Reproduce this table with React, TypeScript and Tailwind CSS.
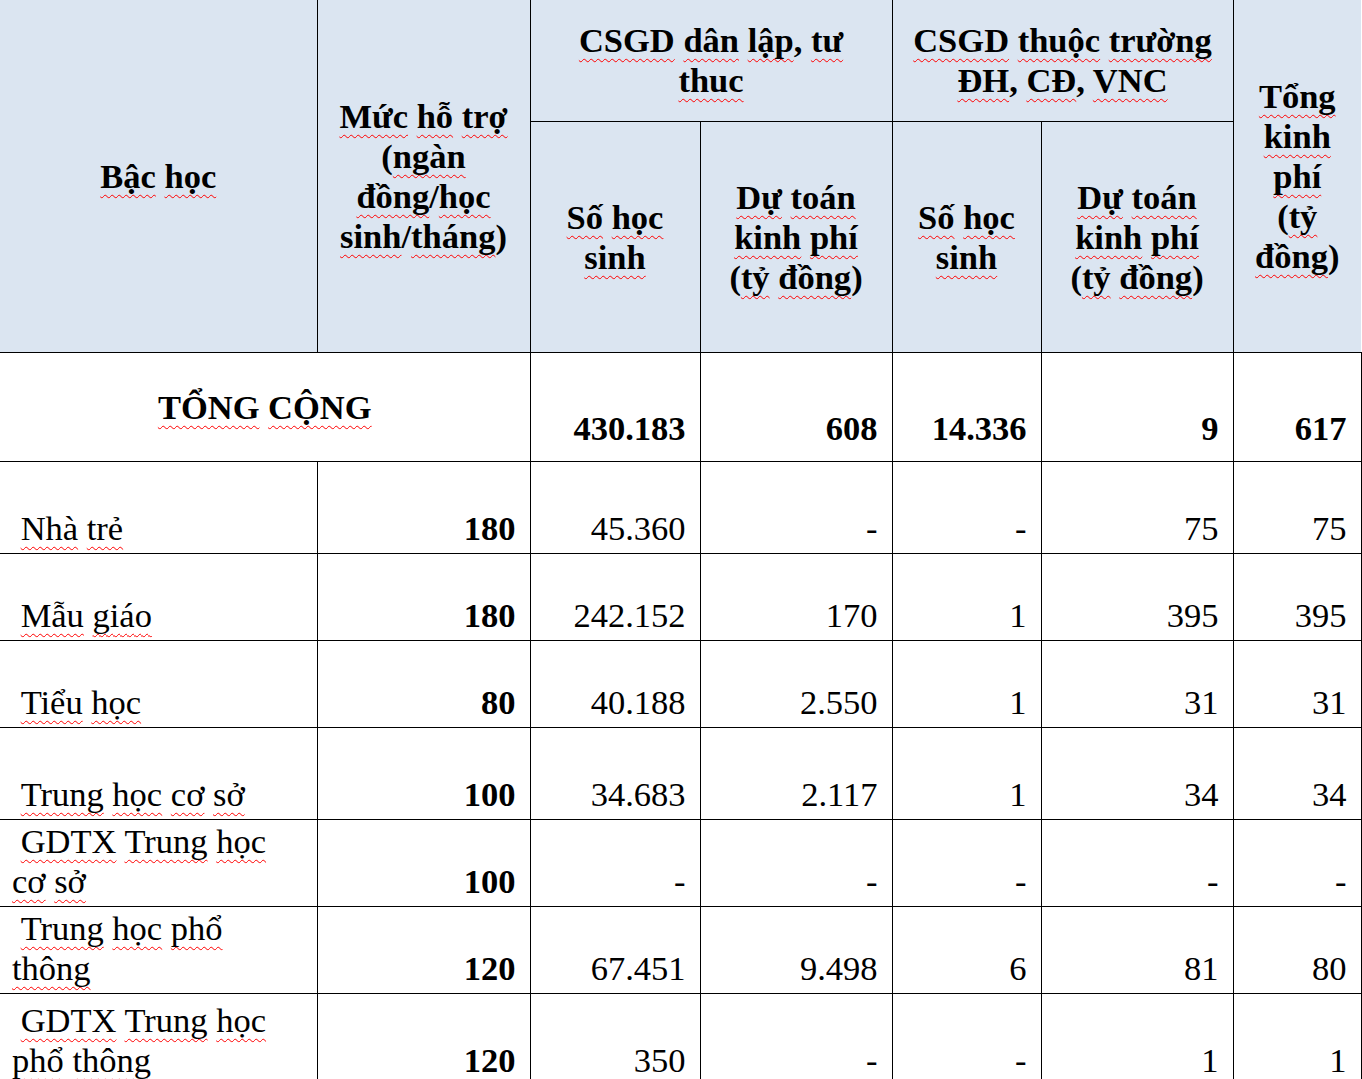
import React from "react";

function U({ t }: { t: string }) {
  const parts = t.split(/([\p{L}\p{M}]+)/u);
  return (
    <>
      {parts.map((p, i) =>
        i % 2 === 1 ? (
          <span
            key={i}
            className="underline decoration-wavy decoration-[#ff0000] decoration-1 underline-offset-[6px] [text-decoration-skip-ink:none]"
          >
            {p}
          </span>
        ) : (
          <React.Fragment key={i}>{p}</React.Fragment>
        )
      )}
    </>
  );
}

function Lines({ lines }: { lines: string[] }) {
  return (
    <>
      {lines.map((l, i) => (
        <React.Fragment key={i}>
          {i > 0 && <br />}
          <U t={l} />
        </React.Fragment>
      ))}
    </>
  );
}

const TH =
  "border-r border-b border-black bg-[#dbe5f1] font-bold text-center align-middle px-1 whitespace-nowrap";
const TD =
  "border-r border-b border-black align-bottom text-right pr-[14px] pl-1 pb-[5px] whitespace-nowrap";
const TD1 =
  "border-b border-r border-black align-bottom text-left pl-[12px] pr-1 pb-[5px] whitespace-nowrap";

type Row = {
  label: string[];
  h: string;
  muc: string;
  v: string[];
};

const rows: Row[] = [
  { label: ["\u00a0Nhà trẻ"], h: "h-[92px]", muc: "180", v: ["45.360", "-", "-", "75", "75"] },
  { label: ["\u00a0Mẫu giáo"], h: "h-[87px]", muc: "180", v: ["242.152", "170", "1", "395", "395"] },
  { label: ["\u00a0Tiểu học"], h: "h-[87px]", muc: "80", v: ["40.188", "2.550", "1", "31", "31"] },
  { label: ["\u00a0Trung học cơ sở"], h: "h-[92px]", muc: "100", v: ["34.683", "2.117", "1", "34", "34"] },
  { label: ["\u00a0GDTX Trung học", "cơ sở"], h: "h-[87px]", muc: "100", v: ["-", "-", "-", "-", "-"] },
  { label: ["\u00a0Trung học phổ", "thông"], h: "h-[87px]", muc: "120", v: ["67.451", "9.498", "6", "81", "80"] },
  { label: ["\u00a0GDTX Trung học", "phổ thông"], h: "h-[92px]", muc: "120", v: ["350", "-", "-", "1", "1"] },
];

export default function App() {
  return (
    <div className="w-[1362px] h-[1079px] overflow-hidden bg-white">
      <table className="table-fixed border-collapse w-[1361px] text-black font-['Liberation_Serif',serif] text-[34.5px] leading-[40px]">
        <colgroup>
          <col className="w-[317px]" />
          <col className="w-[213px]" />
          <col className="w-[170px]" />
          <col className="w-[192px]" />
          <col className="w-[149px]" />
          <col className="w-[192px]" />
          <col className="w-[128px]" />
        </colgroup>
        <thead>
          <tr className="h-[121px]">
            <th rowSpan={2} className={TH}>
              <Lines lines={["Bậc học"]} />
            </th>
            <th rowSpan={2} className={TH}>
              <Lines lines={["Mức hỗ trợ", "(ngàn", "đồng/học", "sinh/tháng)"]} />
            </th>
            <th colSpan={2} className={TH}>
              <Lines lines={["CSGD dân lập, tư", "thuc"]} />
            </th>
            <th colSpan={2} className={TH}>
              <Lines lines={["CSGD thuộc trường", "ĐH, CĐ, VNC"]} />
            </th>
            <th rowSpan={2} className={TH + " border-r-0"}>
              <Lines lines={["Tổng", "kinh", "phí", "(tỷ", "đồng)"]} />
            </th>
          </tr>
          <tr className="h-[231px]">
            <th className={TH}>
              <Lines lines={["Số học", "sinh"]} />
            </th>
            <th className={TH}>
              <Lines lines={["Dự toán", "kinh phí", "(tỷ đồng)"]} />
            </th>
            <th className={TH}>
              <Lines lines={["Số học", "sinh"]} />
            </th>
            <th className={TH}>
              <Lines lines={["Dự toán", "kinh phí", "(tỷ đồng)"]} />
            </th>
          </tr>
        </thead>
        <tbody>
          <tr className="h-[109px]">
            <td colSpan={2} className="border-r border-b border-black text-center align-middle font-bold whitespace-nowrap">
              <U t="TỔNG CỘNG" />
            </td>
            {["430.183", "608", "14.336", "9", "617"].map((v, i) => (
              <td key={i} className={TD + " font-bold pb-[13px]"}>
                {v}
              </td>
            ))}
          </tr>
          {rows.map((r, ri) => (
            <tr key={ri} className={r.h}>
              <td className={TD1}>
                <Lines lines={r.label} />
              </td>
              <td className={TD + " font-bold"}>{r.muc}</td>
              {r.v.map((v, i) => (
                <td key={i} className={TD}>
                  {v}
                </td>
              ))}
            </tr>
          ))}
        </tbody>
      </table>
    </div>
  );
}
